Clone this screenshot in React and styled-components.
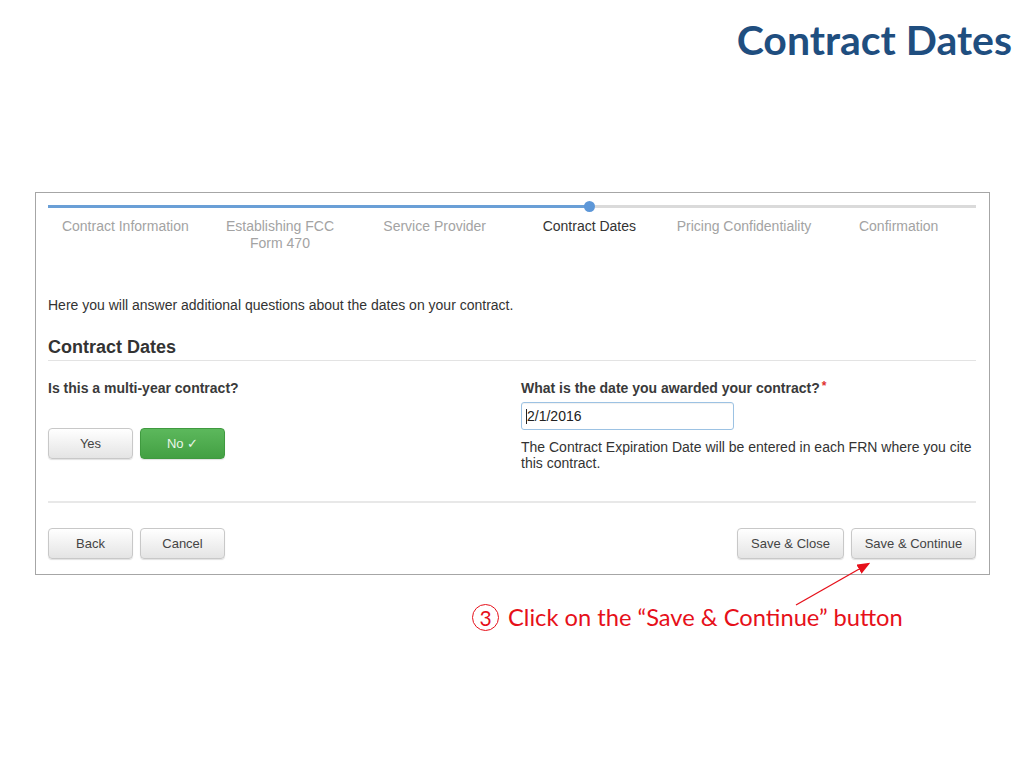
import React from 'react';
import styled, { createGlobalStyle } from 'styled-components';

const GlobalStyle = createGlobalStyle`
  html, body {
    margin: 0;
    padding: 0;
    background: #fff;
  }
  body {
    font-family: "Liberation Sans", Arial, sans-serif;
  }
`;

const Slide = styled.div`
  position: relative;
  width: 1024px;
  height: 768px;
  overflow: hidden;
`;

const Title = styled.h1`
  margin: 0;
  padding: 16px 12px 0 0;
  text-align: right;
  font-family: Lato, "Open Sans", sans-serif;
  font-weight: 700;
  font-size: 41px;
  line-height: 48px;
  color: #1f4e7f;
`;

const Panel = styled.div`
  margin: 128px 0 0 35px;
  width: 955px;
  border: 1px solid #a6a6a6;
  padding: 12px 13px 15px 12px;
  box-sizing: border-box;
  color: #333;
  font-size: 14px;
  line-height: 17px;
`;

const Track = styled.div`
  position: relative;
  height: 3px;
  background: #dadada;
`;

const TrackFill = styled.div`
  height: 100%;
  background: #6a9fd6;
`;

const TrackDot = styled.span`
  position: absolute;
  top: -4px;
  width: 11px;
  height: 11px;
  margin-left: -5px;
  border-radius: 50%;
  background: #5d97d8;
`;

const Steps = styled.div`
  display: grid;
  grid-template-columns: repeat(6, 1fr);
  margin-top: 10px;
  height: 34px;
`;

const Step = styled.div`
  text-align: center;
  color: ${p => (p.$active ? '#333' : '#a3a3a3')};
  padding: 0 8px;
`;

const Intro = styled.p`
  margin: 45px 0 0;
`;

const Heading = styled.h2`
  margin: 22px 0 0;
  padding-bottom: 2px;
  font-size: 18px;
  line-height: 22px;
  font-weight: 700;
  color: #333;
  border-bottom: 1px solid #e3e3e3;
`;

const Questions = styled.div`
  display: grid;
  grid-template-columns: 473px 1fr;
  margin-top: 19px;
  padding-bottom: 30px;
  border-bottom: 2px solid #e8e8e8;
`;

const Question = styled.div`
  display: flex;
  flex-direction: column;
  align-items: flex-start;
`;

const Label = styled.div`
  font-weight: 700;
  color: #3a3a3a;
`;

const Required = styled.span`
  color: #e0322f;
  font-size: 12px;
  line-height: 0;
  margin-left: 2px;
  position: relative;
  top: -3px;
`;

const ButtonRow = styled.div`
  display: flex;
  gap: 7px;
  margin-top: ${p => p.$top || 0}px;
`;

const Button = styled.button`
  width: ${p => p.$w || 85}px;
  height: 31px;
  padding: 0;
  font-family: "Liberation Sans", Arial, sans-serif;
  font-size: 13px;
  color: ${p => (p.$green ? '#eaf6ea' : '#444')};
  border-radius: 4px;
  border: 1px solid ${p => (p.$green ? '#3f9a3f' : '#c8c8c8')};
  background: ${p => (p.$green
    ? 'linear-gradient(#5cb85c, #43a043)'
    : 'linear-gradient(#ffffff, #e4e4e4)')};
  box-shadow: 0 1px 1px rgba(0, 0, 0, 0.12);
`;

const Field = styled.div`
  margin-top: 5px;
  width: 213px;
  height: 28px;
  box-sizing: border-box;
  border: 1px solid #9cc2e3;
  border-radius: 3px;
  padding: 0 4px;
  display: flex;
  align-items: center;
  color: #222;
  box-shadow: inset 0 1px 1px rgba(0, 0, 0, 0.06);
`;

const Caret = styled.span`
  display: inline-block;
  width: 1px;
  height: 15px;
  background: #222;
`;

const Help = styled.p`
  margin: 9px 0 0;
  line-height: 16px;
  color: #333;
  width: 455px;
`;

const Footer = styled.div`
  display: flex;
  justify-content: space-between;
  margin-top: 25px;
`;

const Note = styled.div`
  margin-top: 27px;
  padding-left: 472px;
  display: flex;
  align-items: center;
  gap: 9px;
  font-family: Lato, "Open Sans", sans-serif;
  font-size: 23.7px;
  line-height: 30px;
  color: #e6101a;
`;

const Num = styled.span`
  display: inline-flex;
  align-items: center;
  justify-content: center;
  width: 27px;
  height: 27px;
  box-sizing: border-box;
  border: 1.5px solid #e6101a;
  border-radius: 50%;
  font-size: 21px;
  line-height: 1;
`;

const Arrow = styled.svg`
  position: absolute;
  left: 780px;
  top: 555px;
  overflow: visible;
`;

const steps = [
  'Contract Information',
  'Establishing FCC Form 470',
  'Service Provider',
  'Contract Dates',
  'Pricing Confidentiality',
  'Confirmation',
];

const current = 3;

export default function App() {
  const fill = ((current + 0.5) / steps.length) * 100;
  return (
    <Slide>
      <GlobalStyle />
      <Title>Contract Dates</Title>
      <Panel>
        <Track>
          <TrackFill style={{ width: `${fill}%` }} />
          <TrackDot style={{ left: `${fill}%` }} />
        </Track>
        <Steps>
          {steps.map((s, i) => (
            <Step key={s} $active={i === current}>{s}</Step>
          ))}
        </Steps>
        <Intro>Here you will answer additional questions about the dates on your contract.</Intro>
        <Heading>Contract Dates</Heading>
        <Questions>
          <Question>
            <Label>Is this a multi-year contract?</Label>
            <ButtonRow $top={31}>
              <Button>Yes</Button>
              <Button $green>No ✓</Button>
            </ButtonRow>
          </Question>
          <Question>
            <Label>
              What is the date you awarded your contract?<Required>*</Required>
            </Label>
            <Field>
              <Caret />2/1/2016
            </Field>
            <Help>The Contract Expiration Date will be entered in each FRN where you cite this contract.</Help>
          </Question>
        </Questions>
        <Footer>
          <ButtonRow>
            <Button>Back</Button>
            <Button>Cancel</Button>
          </ButtonRow>
          <ButtonRow>
            <Button $w={107}>Save &amp; Close</Button>
            <Button $w={125}>Save &amp; Continue</Button>
          </ButtonRow>
        </Footer>
      </Panel>
      <Note>
        <Num>3</Num>
        <span>Click on the “Save &amp; Continue” button</span>
      </Note>
      <Arrow width="100" height="60">
        <defs>
          <marker id="head" markerWidth="10" markerHeight="8" refX="8" refY="4" orient="auto">
            <path d="M0,0 L10,4 L0,8 z" fill="#e6101a" />
          </marker>
        </defs>
        <line x1="16" y1="50" x2="88" y2="9" stroke="#e6101a" strokeWidth="1.3" markerEnd="url(#head)" />
      </Arrow>
    </Slide>
  );
}
